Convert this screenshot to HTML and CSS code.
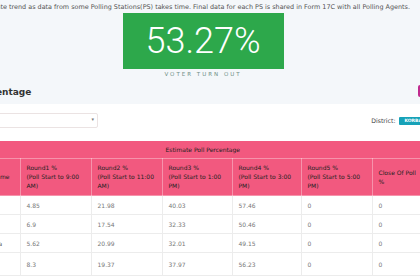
FILE: index.html
```html
<!DOCTYPE html>
<html lang="en">
<head>
    <meta charset="UTF-8">
    <meta name="viewport" content="width=device-width, initial-scale=1.0">
    <title>Poll Percentage</title>
    <link rel="stylesheet" href="styles.css">
</head>
<body>
    <p class="notice"><span>Poll percentage shown is an approximate trend as data from some Polling Stations(PS) takes time. Final data for each PS is shared in Form 17C with all Polling Agents.</span></p>

    <div class="turnout">
        <div class="turnout-box">53.27%</div>
        <div class="turnout-label">VOTER TURN OUT</div>
    </div>

    <div class="section-head">
        <h2 class="section-title">Estimate Poll Percentage</h2>
        <span class="tag-btn"></span>
    </div>

    <div class="card">
        <div class="filters">
            <div class="select-box"><span class="arrow">&#9662;</span></div>
            <div class="district">District: <span class="badge">KORBA</span></div>
        </div>

        <table class="poll-table">
            <colgroup>
                <col class="col-name">
                <col class="col-a">
                <col class="col-a">
                <col class="col-b">
                <col class="col-c">
                <col class="col-a">
                <col class="col-a">
            </colgroup>
            <thead>
                <tr>
                    <th colspan="7" class="th-group">Estimate Poll Percentage</th>
                </tr>
                <tr>
                    <th class="th-name">Assembly Name</th>
                    <th>Round1 %<br>(Poll Start to 9:00 AM)</th>
                    <th>Round2 %<br>(Poll Start to 11:00 AM)</th>
                    <th>Round3 %<br>(Poll Start to 1:00 PM)</th>
                    <th>Round4 %<br>(Poll Start to 3:00 PM)</th>
                    <th>Round5 %<br>(Poll Start to 5:00 PM)</th>
                    <th>Close Of Poll<br>%</th>
                </tr>
            </thead>
            <tbody>
                <tr>
                    <td class="td-name">Korba</td>
                    <td>4.85</td><td>21.98</td><td>40.03</td><td>57.46</td><td>0</td><td>0</td>
                </tr>
                <tr>
                    <td class="td-name">Pali</td>
                    <td>6.9</td><td>17.54</td><td>32.33</td><td>50.46</td><td>0</td><td>0</td>
                </tr>
                <tr>
                    <td class="td-name">Katghora</td>
                    <td>5.62</td><td>20.99</td><td>32.01</td><td>49.15</td><td>0</td><td>0</td>
                </tr>
                <tr class="last-row">
                    <td class="td-name">Rampur</td>
                    <td>8.3</td><td>19.37</td><td>37.97</td><td>56.23</td><td>0</td><td>0</td>
                </tr>
            </tbody>
        </table>
    </div>
</body>
</html>
```

FILE: styles.css
```css
:root {
    --page-bg: #f4f7fa;
    --text-color: #444;
    --muted: #777;
    --green: #2da84b;
    --pink: #f2597f;
    --cyan: #17a2b8;
    --border: #ececec;
}

body {
    margin: 0;
    width: 420px;
    height: 280px;
    overflow: hidden;
    background-color: var(--page-bg);
    color: var(--text-color);
    font-family: 'DejaVu Sans', 'Noto Sans', sans-serif;
}

.notice {
    display: flex;
    justify-content: flex-end;
    margin: 0;
    padding: 3px 10px 0 0;
    font-size: 6.45px;
    line-height: 9px;
    white-space: nowrap;
    color: #555;
}

.turnout {
    display: flex;
    flex-direction: column;
    align-items: center;
    width: 406px;
    margin-top: 1px;
}

.turnout-box {
    width: 161px;
    height: 56px;
    line-height: 56px;
    text-align: center;
    background-color: var(--green);
    color: #fff;
    font-family: Roboto, 'Liberation Sans', sans-serif;
    font-size: 36px;
    font-weight: 300;
}

.turnout-label {
    margin-top: 1px;
    font-size: 5.5px;
    line-height: 8px;
    letter-spacing: 2px;
    color: #6f8f86;
}

.section-head {
    display: flex;
    justify-content: space-between;
    align-items: center;
    height: 24px;
    margin-top: 2px;
}

.section-title {
    margin: 0 0 0 -96.5px;
    font-size: 9px;
    font-weight: 600;
    color: #333;
    white-space: nowrap;
}

.tag-btn {
    width: 10px;
    height: 12px;
    margin: 0 -8px 3px 0;
    border-radius: 2px;
    background-color: #c02a8e;
}

.card {
    background-color: #fff;
    padding-top: 9px;
    height: 180px;
}

.filters {
    display: flex;
    justify-content: space-between;
    align-items: center;
    margin-bottom: 13px;
}

.select-box {
    position: relative;
    width: 110px;
    height: 15px;
    margin-left: -12px;
    box-sizing: border-box;
    border: 1px solid #ebe3e3;
    border-radius: 2px;
    background-color: #fff;
}

.arrow {
    position: absolute;
    right: 3px;
    top: 2px;
    font-size: 5px;
    color: #777;
}

.district {
    display: flex;
    align-items: center;
    gap: 3px;
    margin-right: -8px;
    font-size: 6.2px;
    color: #444;
}

.badge {
    padding: 1px 6px;
    border-radius: 1px;
    background-color: var(--cyan);
    color: #fff;
    font-size: 4.5px;
    font-weight: 700;
    line-height: 6px;
}

.poll-table {
    table-layout: fixed;
    border-collapse: collapse;
    width: 480px;
    margin-left: -37px;
}

.col-name { width: 57px; }
.col-a { width: 71px; }
.col-b { width: 70px; }
.col-c { width: 69px; }

.poll-table th {
    background-color: var(--pink);
    color: #222;
    font-size: 6px;
    font-weight: 400;
    line-height: 9px;
    text-align: left;
    padding: 4px 6px 5px;
    border: 1px solid rgba(255, 255, 255, 0.35);
    border-top: none;
}

.poll-table .th-group {
    text-align: center;
    height: 9px;
    padding: 4px 0;
    border-left: none;
}

.poll-table .th-name {
    white-space: nowrap;
    padding-left: 0;
    text-indent: -2px;
    border-left: none;
}

.poll-table td {
    height: 18px;
    padding: 0 6px;
    font-size: 6px;
    color: var(--muted);
    border: 1px solid var(--border);
    border-top: none;
}

.poll-table .td-name {
    white-space: nowrap;
    padding-left: 12px;
    border-left: none;
    color: #555;
}

.poll-table .last-row td {
    height: 22px;
}
```
